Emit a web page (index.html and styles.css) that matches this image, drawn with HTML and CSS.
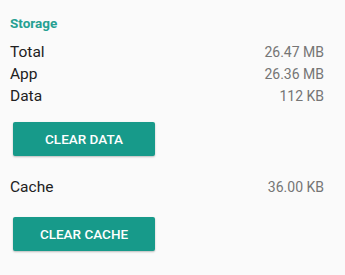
FILE: index.html
```html
<!DOCTYPE html>
<html>
<head>
<meta charset="utf-8">
<link rel="stylesheet" href="styles.css">
</head>
<body>
<div class="panel">
  <div class="heading">Storage</div>
  <div class="rows">
    <div class="row"><span class="label">Total</span><span class="value">26.47 MB</span></div>
    <div class="row"><span class="label">App</span><span class="value">26.36 MB</span></div>
    <div class="row"><span class="label">Data</span><span class="value">112 KB</span></div>
  </div>
  <button class="btn btn-data">CLEAR DATA</button>
  <div class="row cache-row"><span class="label">Cache</span><span class="value">36.00 KB</span></div>
  <button class="btn btn-cache">CLEAR CACHE</button>
</div>
</body>
</html>
```
FILE: styles.css
```css
html, body {
  margin: 0;
  padding: 0;
  background: #fafafa;
}
body {
  width: 345px;
  height: 275px;
  overflow: hidden;
  font-family: Roboto, "Liberation Sans", sans-serif;
}
.panel {
  display: flex;
  flex-direction: column;
  padding: 14px 21px 0 10px;
}
.heading {
  font-size: 13.5px;
  font-weight: 700;
  color: #26a092;
  line-height: 18px;
}
.rows {
  display: flex;
  flex-direction: column;
  margin-top: 11px;
}
.row {
  display: flex;
  justify-content: space-between;
  align-items: baseline;
  height: 22px;
}
.label {
  font-size: 15.5px;
  color: #212121;
}
.value {
  font-size: 14px;
  color: #757575;
}
.btn {
  align-self: flex-start;
  width: 142px;
  height: 34px;
  margin-left: 3px;
  border: none;
  border-radius: 2px;
  background: #179a8a;
  color: #ffffff;
  font-family: Roboto, "Liberation Sans", sans-serif;
  font-size: 13.5px;
  font-weight: 500;
  letter-spacing: 0;
  box-shadow: 0 1px 2px rgba(0,0,0,0.25);
  padding: 0;
}
.btn-data {
  margin-top: 13px;
}
.cache-row {
  margin-top: 22px;
}
.btn-cache {
  margin-top: 17px;
}
```
